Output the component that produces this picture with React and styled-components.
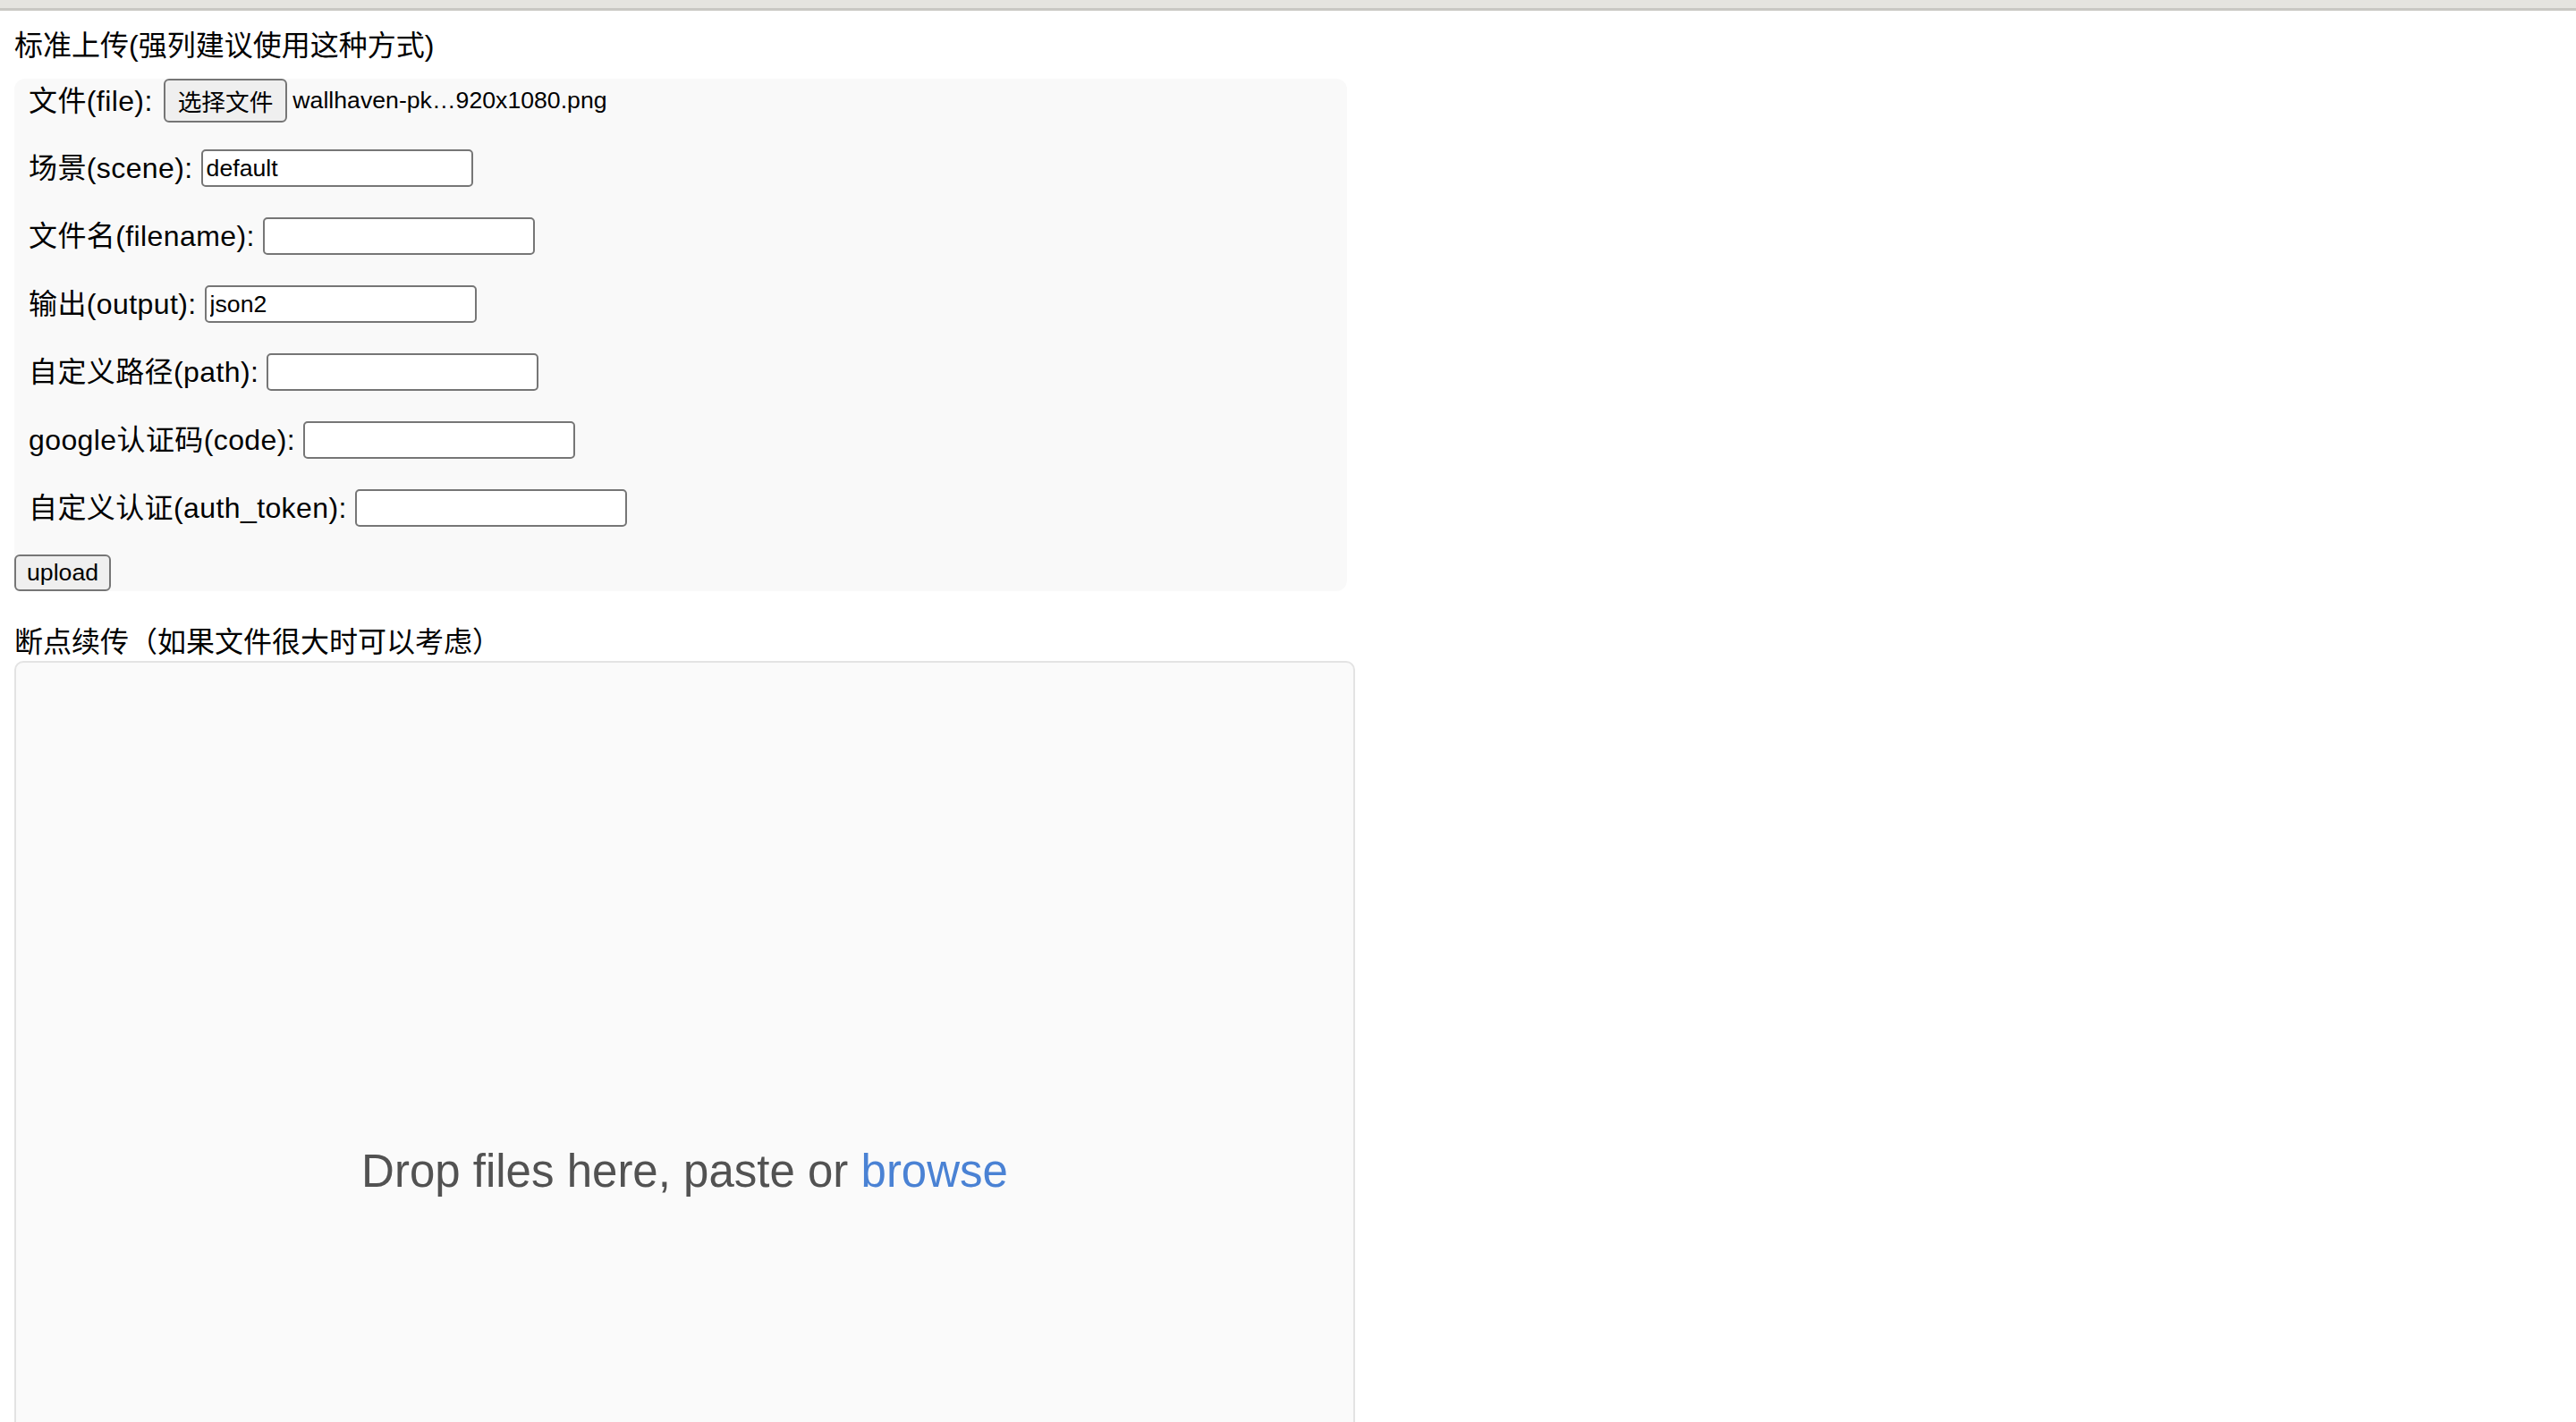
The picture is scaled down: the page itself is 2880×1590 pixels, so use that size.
import React from "react";
import styled, { createGlobalStyle } from "styled-components";

const GlobalStyle = createGlobalStyle`
  html, body {
    margin: 0;
    padding: 0;
    background: #ffffff;
    overflow: hidden;
  }
  body {
    font-family: "Liberation Sans", "Noto Sans CJK SC", sans-serif;
    color: #000;
  }
`;

const Page = styled.div`
  width: 100%;
  min-height: 100vh;
`;

const TopBar = styled.div`
  height: 9px;
  background: #e5e4df;
  border-bottom: 3px solid #c9c8c3;
`;

const Main = styled.main`
  padding: 0 16px;
  display: flex;
  flex-direction: column;
  align-items: flex-start;
`;

const SectionTitle = styled.div`
  font-size: 32px;
  line-height: 44px;
  margin-top: ${(p) => p.$top}px;
  margin-bottom: ${(p) => p.$bottom}px;
  white-space: nowrap;
`;

const FormPanel = styled.form`
  width: 1490px;
  box-sizing: border-box;
  background: #f9f9f9;
  border-radius: 12px;
  display: flex;
  flex-direction: column;
  align-items: flex-start;
`;

const FieldRow = styled.div`
  height: ${(p) => p.$h || 44}px;
  margin-top: ${(p) => p.$mt ?? 32}px;
  padding-left: 16px;
  display: flex;
  align-items: center;
  gap: ${(p) => p.$gap || 9}px;
`;

const Label = styled.label`
  font-size: 32px;
  line-height: 44px;
  letter-spacing: 0.4px;
  white-space: nowrap;
`;

const TextInput = styled.input`
  width: 304px;
  height: 42px;
  box-sizing: border-box;
  border: 2px solid #767676;
  border-radius: 5px;
  background: #fff;
  padding: 2px 4px;
  font-family: "Liberation Sans", "Noto Sans CJK SC", sans-serif;
  font-size: 26.67px;
  color: #000;
  outline: none;
`;

const NativeButton = styled.button`
  height: ${(p) => p.$h}px;
  margin-top: ${(p) => p.$mt || 0}px;
  box-sizing: border-box;
  padding: 0 ${(p) => p.$pad}px;
  border: 2px solid #767676;
  border-radius: 6px;
  background: #efefef;
  font-family: "Liberation Sans", "Noto Sans CJK SC", sans-serif;
  font-size: 26.67px;
  color: #000;
  display: inline-flex;
  align-items: center;
  justify-content: center;
  white-space: nowrap;
`;

const FileName = styled.span`
  font-size: 26.67px;
  white-space: nowrap;
  margin-left: -6px;
`;

const DropZone = styled.div`
  width: 1499px;
  height: 1140px;
  box-sizing: border-box;
  background: #fafafa;
  border: 2px solid #e3e3e3;
  border-radius: 10px;
  display: flex;
  align-items: center;
  justify-content: center;
`;

const DropText = styled.div`
  font-family: "Liberation Sans", sans-serif;
  font-size: 51px;
  color: #525252;
  white-space: nowrap;
`;

const BrowseLink = styled.span`
  color: #4a82d4;
  cursor: pointer;
`;

const fields = [
  { label: "场景(scene):", value: "default" },
  { label: "文件名(filename):", value: "" },
  { label: "输出(output):", value: "json2" },
  { label: "自定义路径(path):", value: "" },
  { label: "google认证码(code):", value: "" },
  { label: "自定义认证(auth_token):", value: "" },
];

export default function App() {
  return (
    <Page>
      <GlobalStyle />
      <TopBar />
      <Main>
        <SectionTitle $top={17} $bottom={15}>
          标准上传(强列建议使用这种方式)
        </SectionTitle>
        <FormPanel onSubmit={(e) => e.preventDefault()}>
          <FieldRow $h={49} $gap={12} $mt={0}>
            <Label>文件(file):</Label>
            <NativeButton type="button" $h={49} $pad={14}>
              选择文件
            </NativeButton>
            <FileName>wallhaven-pk…920x1080.png</FileName>
          </FieldRow>
          {fields.map((f, i) => (
            <FieldRow key={f.label} $mt={i === 0 ? 29 : 32}>
              <Label>{f.label}</Label>
              <TextInput type="text" defaultValue={f.value} />
            </FieldRow>
          ))}
          <NativeButton type="submit" $h={41} $pad={12} $mt={30}>
            upload
          </NativeButton>
        </FormPanel>
        <SectionTitle $top={35} $bottom={-1}>
          断点续传（如果文件很大时可以考虑）
        </SectionTitle>
        <DropZone>
          <DropText>
            Drop files here, paste or <BrowseLink>browse</BrowseLink>
          </DropText>
        </DropZone>
      </Main>
    </Page>
  );
}
